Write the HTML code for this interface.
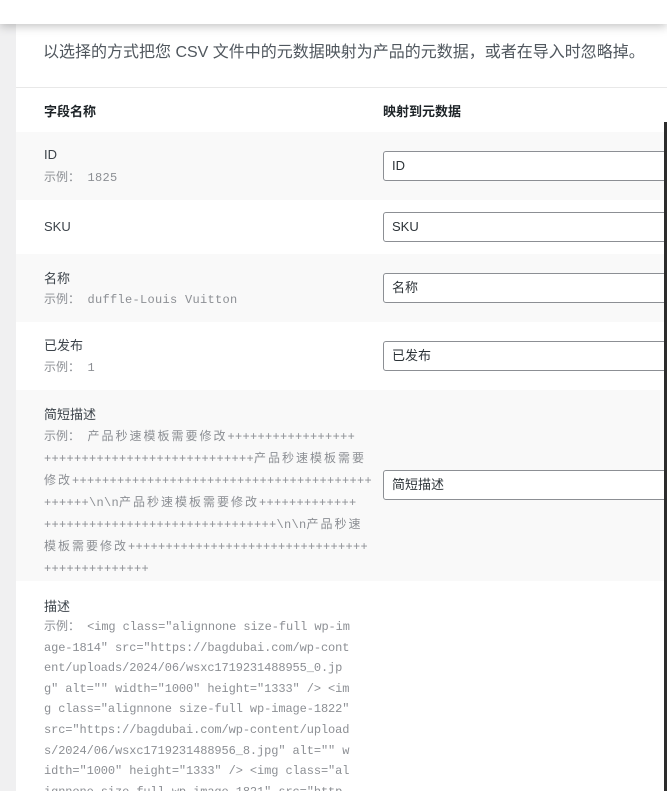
<!DOCTYPE html>
<html><head><meta charset="utf-8"><style>
*{margin:0;padding:0;box-sizing:border-box}
html,body{width:667px;height:791px;overflow:hidden}
body{background:#f0f0f1;position:relative;font-family:"Liberation Sans","Noto Sans CJK SC",sans-serif;}
.top{position:absolute;left:0;top:0;width:667px;height:24px;background:#fff;box-shadow:0 2px 10px rgba(0,0,0,.25);z-index:3}
.card{position:absolute;left:16px;top:24px;width:651px;height:767px;background:#fff}
.abs{position:absolute}
.row{position:absolute;left:16px;width:651px}
.g{background:#f9f9f9}
.lab{position:absolute;left:44px;font-size:13px;color:#3c434a}
.ex{position:absolute;left:44px;font-size:12px;color:#8c8f94;font-family:"Liberation Mono","Noto Sans CJK SC",monospace;line-height:22px;letter-spacing:0.3px;white-space:pre}
.ex .z{font-family:"Liberation Sans","Noto Sans CJK SC",sans-serif;letter-spacing:0}
.ex .c{letter-spacing:2px}
.sel{position:absolute;left:383px;width:300px;height:30px;border:1px solid #8c8f94;border-radius:3px;background:#fff;font-size:13px;color:#2c3338;padding:6px 8px;line-height:16px}
</style></head><body>
<div class="top"></div>
<div class="card"></div>
<div class="abs" style="left:43px;top:38px;font-size:16px;color:#50575e">以选择的方式把您 CSV 文件中的元数据映射为产品的元数据，或者在导入时忽略掉。</div>
<div class="abs" style="left:16px;top:87px;width:651px;height:1px;background:#e8e8e8"></div>
<div class="abs" style="left:44px;top:101px;font-size:13px;font-weight:bold;color:#1d2327">字段名称</div>
<div class="abs" style="left:383px;top:101px;font-size:13px;font-weight:bold;color:#1d2327">映射到元数据</div>

<div class="row g" style="top:132px;height:68px"></div>
<div class="lab" style="top:147px">ID</div>
<div class="ex" style="top:166px"><span class="z">示例：</span> 1825</div>
<div class="sel" style="top:151px">ID</div>

<div class="lab" style="top:219px">SKU</div>
<div class="sel" style="top:212px">SKU</div>

<div class="row g" style="top:254px;height:68px"></div>
<div class="lab" style="top:268px">名称</div>
<div class="ex" style="top:288px"><span class="z">示例：</span> duffle-Louis Vuitton</div>
<div class="sel" style="top:273px">名称</div>

<div class="lab" style="top:335px">已发布</div>
<div class="ex" style="top:356px"><span class="z">示例：</span> 1</div>
<div class="sel" style="top:341px">已发布</div>

<div class="row g" style="top:390px;height:191px"></div>
<div class="lab" style="top:404px">简短描述</div>
<div class="ex" style="top:425px"><span class="z">示例：</span> <span class="c">产品秒速模板需要修改</span>+++++++++++++++++
++++++++++++++++++++++++++++<span class="c">产品秒速模板需要</span>
<span class="c">修改</span>++++++++++++++++++++++++++++++++++++++++
++++++\n\n<span class="c">产品秒速模板需要修改</span>+++++++++++++
+++++++++++++++++++++++++++++++\n\n<span class="c">产品秒速</span>
<span class="c">模板需要修改</span>++++++++++++++++++++++++++++++++
++++++++++++++</div>
<div class="sel" style="top:470px">简短描述</div>

<div class="lab" style="top:596px">描述</div>
<div class="ex" style="top:616px;line-height:20.6px;letter-spacing:-0.1px"><span class="z">示例：</span> &lt;img class="alignnone size-full wp-im
age-1814" src="https://bagdubai.com/wp-cont
ent/uploads/2024/06/wsxc1719231488955_0.jp
g" alt="" width="1000" height="1333" /&gt; &lt;im
g class="alignnone size-full wp-image-1822"
src="https://bagdubai.com/wp-content/upload
s/2024/06/wsxc1719231488956_8.jpg" alt="" w
idth="1000" height="1333" /&gt; &lt;img class="al
ignnone size-full wp-image-1821" src="http</div>
<div class="abs" style="left:664px;top:122px;width:3px;height:670px;background:#2c2c2c"></div>
</body></html>
